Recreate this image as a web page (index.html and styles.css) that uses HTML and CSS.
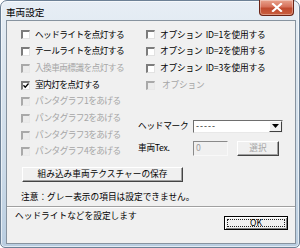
FILE: index.html
```html
<!DOCTYPE html>
<html lang="ja">
<head>
<meta charset="utf-8">
<title>車両設定</title>
<link rel="stylesheet" href="styles.css">
</head>
<body>
<div class="window">
  <div class="titlebar">
    <span class="title">車両設定</span>
    <div class="close"><svg width="12" height="9" viewBox="0 0 12 9"><path d="M2 1 L10 8 M10 1 L2 8" stroke="#fff" stroke-width="2.2" stroke-linecap="square"/></svg></div>
  </div>
  <div class="client">
    <div class="main">
      <div class="cols">
        <div class="col-left">
          <div class="cb"><span class="box"></span><span class="lbl">ヘッドライトを点灯する</span></div>
          <div class="cb"><span class="box"></span><span class="lbl">テールライトを点灯する</span></div>
          <div class="cb off"><span class="box"></span><span class="lbl">入換車両標識を点灯する</span></div>
          <div class="cb"><span class="box checked"><svg width="7" height="7" viewBox="0 0 7 7"><path d="M0.5 3.2 L2.6 5.4 L6.5 1.2" fill="none" stroke="#000" stroke-width="1.6"/></svg></span><span class="lbl">室内灯を点灯する</span></div>
          <div class="cb off"><span class="box"></span><span class="lbl">パンタグラフ1をあげる</span></div>
          <div class="cb off"><span class="box"></span><span class="lbl">パンタグラフ2をあげる</span></div>
          <div class="cb off"><span class="box"></span><span class="lbl">パンタグラフ3をあげる</span></div>
          <div class="cb off"><span class="box"></span><span class="lbl">パンタグラフ4をあげる</span></div>
        </div>
        <div class="col-right">
          <div class="cb"><span class="box"></span><span class="lbl">オプション ID=1を使用する</span></div>
          <div class="cb"><span class="box"></span><span class="lbl">オプション ID=2を使用する</span></div>
          <div class="cb"><span class="box"></span><span class="lbl">オプション ID=3を使用する</span></div>
          <div class="cb off"><span class="box"></span><span class="lbl">オプション</span></div>
          <div class="field hm">
            <span class="flabel">ヘッドマーク</span>
            <div class="combo"><span class="ctext">-----</span><span class="arrow"><svg width="7" height="4" viewBox="0 0 7 4"><path d="M0 0 H7 L3.5 4 Z" fill="#000"/></svg></span></div>
          </div>
          <div class="field tex">
            <span class="flabel">車両Tex.</span>
            <div class="tbox">0</div>
            <div class="btn disabled sel">選択</div>
          </div>
        </div>
      </div>
      <div class="btn save">組み込み車両テクスチャーの保存</div>
      <div class="note">注意：グレー表示の項目は設定できません。</div>
    </div>
    <div class="footer">
      <span class="status">ヘッドライトなどを設定します</span>
      <div class="btn ok"><span class="focus">OK</span></div>
    </div>
  </div>
</div>
</body>
</html>
```

FILE: styles.css
```css
* { box-sizing: border-box; }
html, body { margin: 0; padding: 0; background: #ffffff; }
body {
  font-family: "Noto Sans CJK JP", "Noto Sans", sans-serif;
  font-size: 8.7px;
  line-height: 1;
  color: #000;
}
.window {
  position: relative;
  width: 300px;
  height: 248px;
  border: 1px solid #6d8196;
  border-radius: 7px 7px 5px 5px;
  background: linear-gradient(180deg, #e7eef5 0%, #d9e4ee 30%, #cbdae8 70%, #b9cde0 100%);
  box-shadow: inset 0 0 0 1px rgba(255,255,255,0.6);
}
.titlebar {
  height: 19px;
  display: flex;
  align-items: center;
  padding-left: 5px;
}
.title {
  font-size: 9.6px;
  color: #000;
  margin-top: 4px;
}
.close {
  position: absolute;
  top: -1px;
  right: 5px;
  width: 35px;
  height: 16px;
  border: 1px solid #6b2416;
  border-top: none;
  border-radius: 0 0 4px 4px;
  background: linear-gradient(180deg, #e9a38e 0%, #d6715a 45%, #c04a2f 55%, #c9603f 100%);
  box-shadow: inset 0 0 0 1px rgba(255,255,255,0.35);
  display: flex;
  align-items: center;
  justify-content: center;
}
.client {
  margin-left: 5px;
  width: 290px;
  height: 224px;
  border: 1px solid #87939f;
  background: #f0f0f0;
  display: flex;
  flex-direction: column;
}
.main {
  height: 186px;
  padding-top: 5.6px;
  border-bottom: 1px solid #a0a0a0;
  display: flex;
  flex-direction: column;
}
.cols { display: flex; }
.col-left { width: 131px; padding-left: 14px; }
.col-right { flex: 1; }
.col-right .cb { padding-left: 8px; }
.cb {
  height: 16.7px;
  display: flex;
  align-items: center;
  gap: 5px;
  white-space: nowrap;
}
.cb .lbl { letter-spacing: -0.6px; }
.col-right .cb .lbl { letter-spacing: -0.2px; word-spacing: 1.5px; }
.box {
  width: 9px;
  height: 9px;
  flex: none;
  background: #fff;
  border-style: solid;
  border-width: 2px 1px 1px 2px;
  border-color: #7c7c7c #e2e2e2 #e2e2e2 #7c7c7c;
  display: flex;
  align-items: center;
  justify-content: center;
}
.cb.off .box { background: #ececec; border-color: #a9a9a9 #e8e8e8 #e8e8e8 #a9a9a9; }
.cb.off .lbl { color: #a6a6a6; }
.col-right .cb.off .lbl { margin-left: 2px; }
.field {
  display: flex;
  align-items: center;
}
.flabel { width: 55px; flex: none; white-space: nowrap; letter-spacing: -0.3px; }
.hm { margin-top: 26.5px; height: 13px; }
.tex { margin-top: 8px; height: 15px; }
.combo {
  width: 90px;
  height: 13px;
  background: #fff;
  border-style: solid;
  border-width: 1px;
  border-color: #6e6e6e #e8e8e8 #e8e8e8 #6e6e6e;
  display: flex;
  align-items: center;
  justify-content: space-between;
}
.ctext { padding-left: 2px; letter-spacing: 1px; }
.arrow {
  width: 13px;
  height: 11px;
  background: #f0f0f0;
  border-style: solid;
  border-width: 1px;
  border-color: #fff #404040 #404040 #fff;
  display: flex;
  align-items: center;
  justify-content: center;
}
.tbox {
  width: 35px;
  height: 15px;
  background: #f0f0f0;
  border-style: solid;
  border-width: 1px;
  border-color: #8a8a8a #f8f8f8 #f8f8f8 #8a8a8a;
  color: #a0a0a0;
  padding-left: 2px;
  display: flex;
  align-items: center;
}
.btn {
  background: #f0f0f0;
  border-style: solid;
  border-width: 1px;
  border-color: #fff #444 #444 #fff;
  box-shadow: inset -1px -1px 0 #a0a0a0;
  display: flex;
  align-items: center;
  justify-content: center;
  white-space: nowrap;
}
.btn.disabled { color: #a6a6a6; }
.sel { width: 42px; height: 15px; margin-left: 9px; }
.save {
  margin-top: 6.7px;
  margin-left: 15px;
  width: 161px;
  height: 15px;
}
.note {
  margin-top: 11px;
  margin-left: 14px;
}
.footer {
  flex: 1;
  border-top: 1px solid #fff;
  display: flex;
  justify-content: space-between;
  align-items: flex-start;
  padding: 4px 7px 0 8px;
}
.status { margin-top: 0px; }
.ok {
  width: 64px;
  height: 14px;
  margin-top: 4px;
  border: 1px solid #000;
  box-shadow: inset 1px 1px 0 #fff, inset -1px -1px 0 #808080;
  padding: 2px;
}
.focus {
  flex: 1;
  align-self: stretch;
  border: 1px dotted #222;
  display: flex;
  align-items: center;
  justify-content: center;
}
```
